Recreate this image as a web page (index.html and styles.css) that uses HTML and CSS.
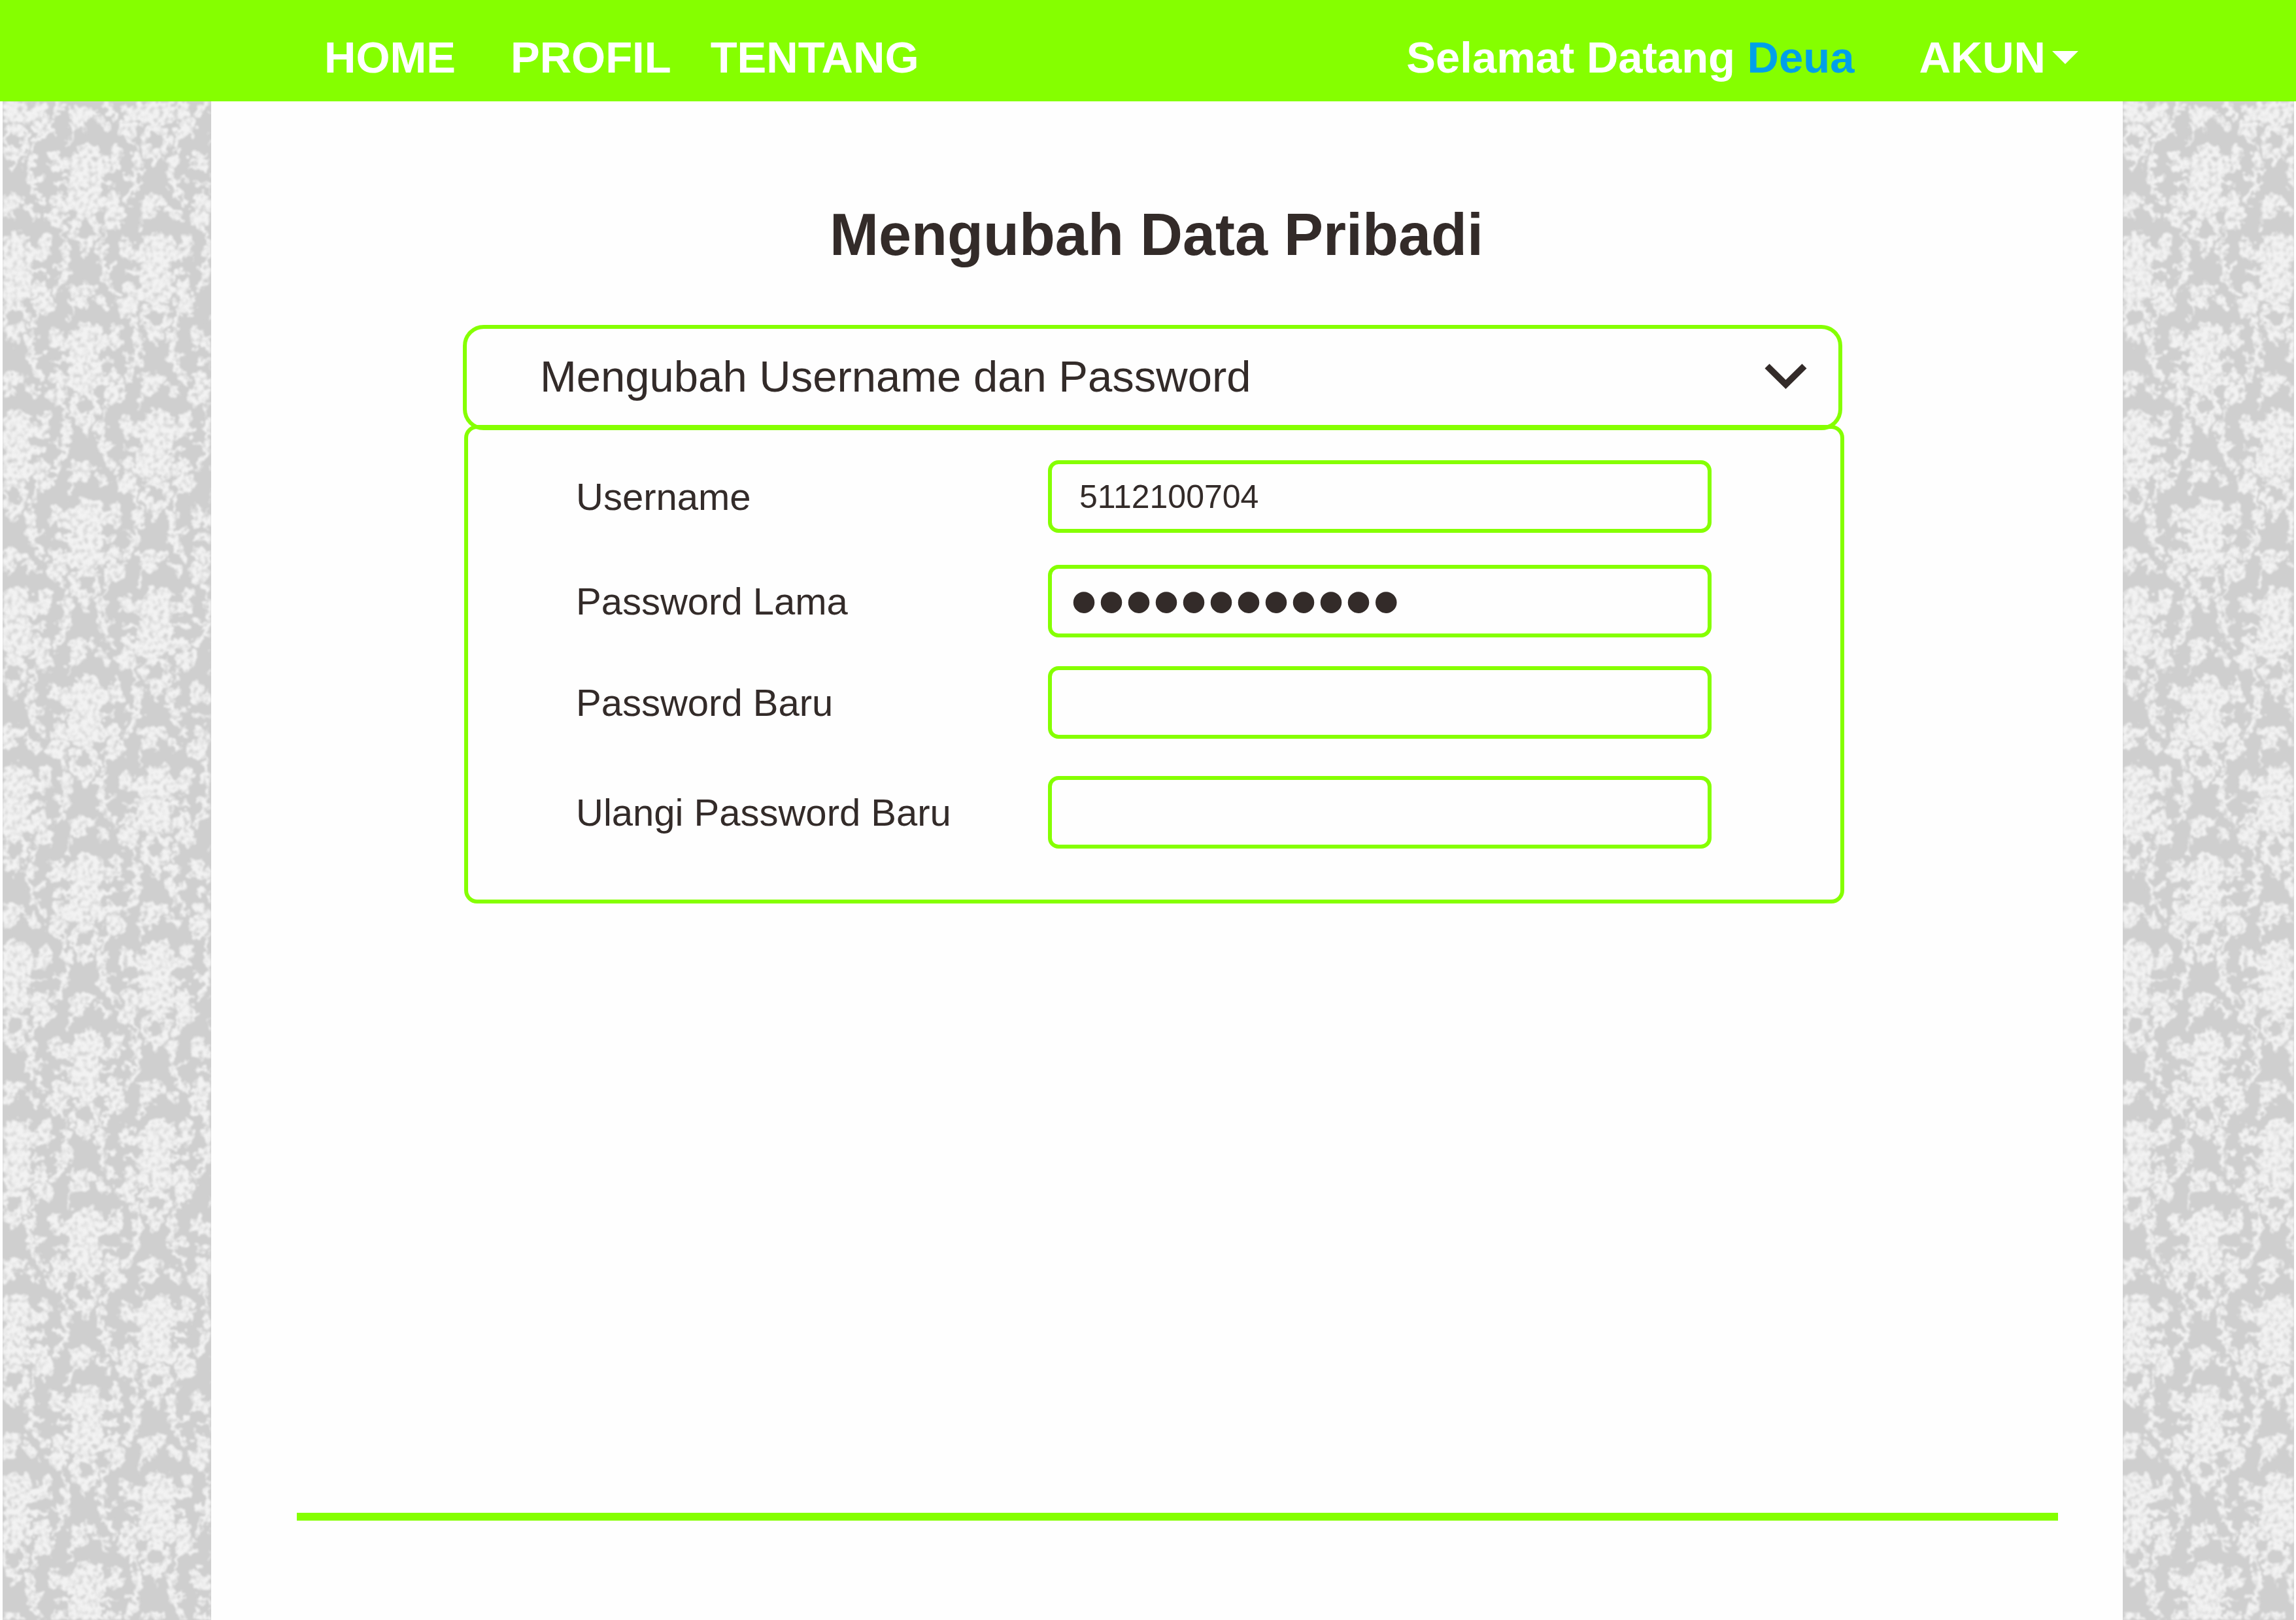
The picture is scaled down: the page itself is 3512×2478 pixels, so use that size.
FILE: index.html
```html
<!DOCTYPE html>
<html lang="id">
<head>
<meta charset="utf-8">
<meta name="viewport" content="width=device-width, initial-scale=1">
<title>Mengubah Data Pribadi</title>
<link rel="stylesheet" href="styles.css">
</head>
<body>
<header class="topbar">
  <nav class="menu">
    <a class="menu-link menu-home" href="#">HOME</a>
    <a class="menu-link" href="#">PROFIL</a>
    <a class="menu-link" href="#">TENTANG</a>
  </nav>
  <div class="session">
    <p class="welcome">Selamat Datang <a class="user" href="#">Deua</a></p>
    <button class="account" type="button" aria-haspopup="true">AKUN<svg class="caret" viewBox="0 0 40 20" aria-hidden="true"><path d="M0 0H40L20 20Z" fill="currentColor"/></svg></button>
  </div>
</header>

<div class="page">
  <aside class="wallpaper">
    <svg class="damask" aria-hidden="true">
      <defs>
        <g id="motif" fill="#f2f2f2" stroke="#f2f2f2" stroke-width="0" stroke-linecap="round">
          <circle r="18" fill="none" stroke-width="12"/>
          <path d="M-16 18L0 44L16 18Z"/>
          <ellipse cy="-62" rx="26" ry="34"/>
          <ellipse cy="-38" rx="36" ry="14"/>
          <ellipse cy="-97" rx="37" ry="19"/>
          <ellipse cx="5" cy="-116" rx="21" ry="15"/>
          <ellipse cx="-42" cy="-98" rx="14" ry="9"/>
          <ellipse cx="-46" cy="-112" rx="10" ry="9"/>
          <ellipse cx="42" cy="-98" rx="16" ry="10"/>
          <ellipse cx="48" cy="-116" rx="9" ry="12"/>
          <circle cx="-43" cy="-18" r="16"/>
          <circle cx="46" cy="-19" r="16"/>
          <circle cx="-41" cy="-45" r="11"/>
          <circle cx="42" cy="-45" r="12"/>
          <path d="M-44 -70h18M26 -70h20" stroke-width="8"/>
          <path d="M-34 -6L-30 16M34 -6L28 16" stroke-width="6"/>
          <circle cx="-28" cy="30" r="10"/>
          <circle cx="25" cy="31" r="10"/>
          <path d="M-27 36L-30 68L-46 96M24 36L26 68L46 98" fill="none" stroke-width="10"/>
          <path d="M-26 66L-46 57M25 66L44 56" stroke-width="8"/>
          <ellipse cx="-4" cy="93" rx="22" ry="10"/>
          <ellipse cx="-10" cy="110" rx="14" ry="10"/>
          <path d="M-20 112L-25 140" stroke-width="5"/>
          <path d="M22 104L34 116" stroke-width="12"/>
        </g>
        <pattern id="damask-tile" width="217" height="271" patternUnits="userSpaceOnUse">
          <use href="#motif" x="135" y="-66"/>
          <use href="#motif" x="135" y="205"/>
          <use href="#motif" x="135" y="476"/>
          <use href="#motif" x="26" y="69"/>
          <use href="#motif" x="243" y="69"/>
          <use href="#motif" x="26" y="340"/>
          <use href="#motif" x="243" y="340"/>
          <use href="#motif" x="-82" y="-66"/>
          <use href="#motif" x="-82" y="205"/>
        </pattern>
        <pattern id="damask-shifted" width="217" height="271" patternUnits="userSpaceOnUse" x="-9" y="-9" href="#damask-tile"/>
        <filter id="petals" x="0" y="0" width="100%" height="100%" color-interpolation-filters="sRGB">
          <feTurbulence type="fractalNoise" baseFrequency="0.09" numOctaves="2" seed="4" result="coarse"/>
          <feDisplacementMap in="SourceGraphic" in2="coarse" scale="24" xChannelSelector="R" yChannelSelector="G" result="leaves"/>
          <feTurbulence type="fractalNoise" baseFrequency="0.13" numOctaves="2" seed="9"/>
          <feColorMatrix values="0 0 0 0 0  0 0 0 0 0  0 0 0 0 0  2.6 0 0 0 -0.45" result="grain"/>
          <feComposite in="leaves" in2="grain" operator="in"/>
          <feGaussianBlur stdDeviation="1.5"/>
        </filter>
      </defs>
      <rect class="damask-fill" width="100%" height="100%"/>
    </svg>
  </aside>

  <main class="content">
    <section class="settings">
      <h1 class="title">Mengubah Data Pribadi</h1>
      <button class="section-toggle" type="button" aria-expanded="true" aria-controls="credentials">
        Mengubah Username dan Password
        <svg class="chevron" viewBox="0 0 65 39" aria-hidden="true"><path d="M4 4L32.500 32L61 4" fill="none" stroke="currentColor" stroke-width="10"/></svg>
      </button>
      <form class="credentials" id="credentials">
        <label class="label" for="username">Username</label>
        <input class="field" id="username" type="text" value="5112100704">
        <label class="label" for="old-password">Password Lama</label>
        <input class="field field-secret" id="old-password" type="password" value="rahasia12345">
        <label class="label" for="new-password">Password Baru</label>
        <input class="field field-secret" id="new-password" type="password">
        <label class="label" for="repeat-password">Ulangi Password Baru</label>
        <input class="field field-secret" id="repeat-password" type="password">
      </form>
    </section>
    <hr class="rule">
  </main>

  <aside class="wallpaper">
    <svg class="damask" aria-hidden="true"><rect class="damask-fill" width="100%" height="100%"/></svg>
  </aside>
</div>
</body>
</html>
```

FILE: styles.css
```css
:root {
  --green: #85ff00;
  --ink: #332b29;
  --paper: #fefefe;
}

* {
  box-sizing: border-box;
}

body {
  margin: 0;
  min-height: 100vh;
  display: flex;
  flex-direction: column;
  background: var(--paper);
  color: var(--ink);
  font-family: "Liberation Sans", Arial, sans-serif;
}

button,
input {
  margin: 0;
  font-family: inherit;
  color: inherit;
  background: transparent;
}

/* Top bar */
.topbar {
  display: flex;
  justify-content: space-between;
  align-items: center;
  min-height: 155px;
  padding: 21px 333px 0 496px;
  background: var(--green);
  color: #fff;
  font-size: 67px;
  font-weight: bold;
  line-height: 80px;
}

.menu {
  display: flex;
  gap: 60px;
}

.menu-link {
  color: inherit;
  text-decoration: none;
}

.menu-home {
  margin-right: 24px;
}

.session {
  display: flex;
  align-items: center;
  gap: 99px;
}

.welcome {
  margin: 0;
}

.user {
  color: #00a0e9;
  text-decoration: none;
}

.account {
  display: flex;
  align-items: center;
  gap: 10px;
  padding: 0;
  border: 0;
  font-size: inherit;
  font-weight: inherit;
  line-height: inherit;
}

.caret {
  width: 40px;
  height: 20px;
}

/* Page columns */
.page {
  flex: 1;
  display: grid;
  grid-template-columns: 319px 1fr 262px;
  padding: 0 3px 0 4px;
}

.wallpaper {
  display: flex;
  background: #cfcfcf;
}

.damask {
  width: 100%;
  height: 100%;
}

.damask-fill {
  fill: url(#damask-shifted);
  filter: url(#petals);
}

.content {
  display: flex;
  flex-direction: column;
  justify-content: space-between;
  padding: 152px 99px 152px 131px;
}

.settings {
  padding: 0 330px 0 254px;
}

.title {
  margin: 0 0 86px;
  padding-left: 12px;
  font-size: 90px;
  line-height: 104px;
  text-align: center;
}

.section-toggle {
  display: flex;
  align-items: center;
  justify-content: space-between;
  width: 100%;
  height: 161px;
  padding: 0 48px 4px 112px;
  border: 6px solid var(--green);
  border-radius: 32px;
  font-size: 67px;
  text-align: left;
}

.chevron {
  width: 65px;
  height: 39px;
}

.credentials {
  display: grid;
  grid-template-columns: 722px 1fr;
  grid-template-rows: 160px 155px 168px 111px;
  margin: -8px -3px 0 2px;
  padding: 48px 197px 78px 165px;
  border: 6px solid var(--green);
  border-radius: 20px;
}

.label {
  font-size: 58px;
  line-height: 112px;
}

.field {
  width: 100%;
  height: 111px;
  padding: 0 42px;
  border: 6px solid var(--green);
  border-radius: 16px;
  font-size: 50px;
}

.field-secret {
  padding: 0 28px;
  font-size: 120px;
}

.rule {
  width: 100%;
  height: 12px;
  margin: 0;
  border: 0;
  background: var(--green);
}
```
